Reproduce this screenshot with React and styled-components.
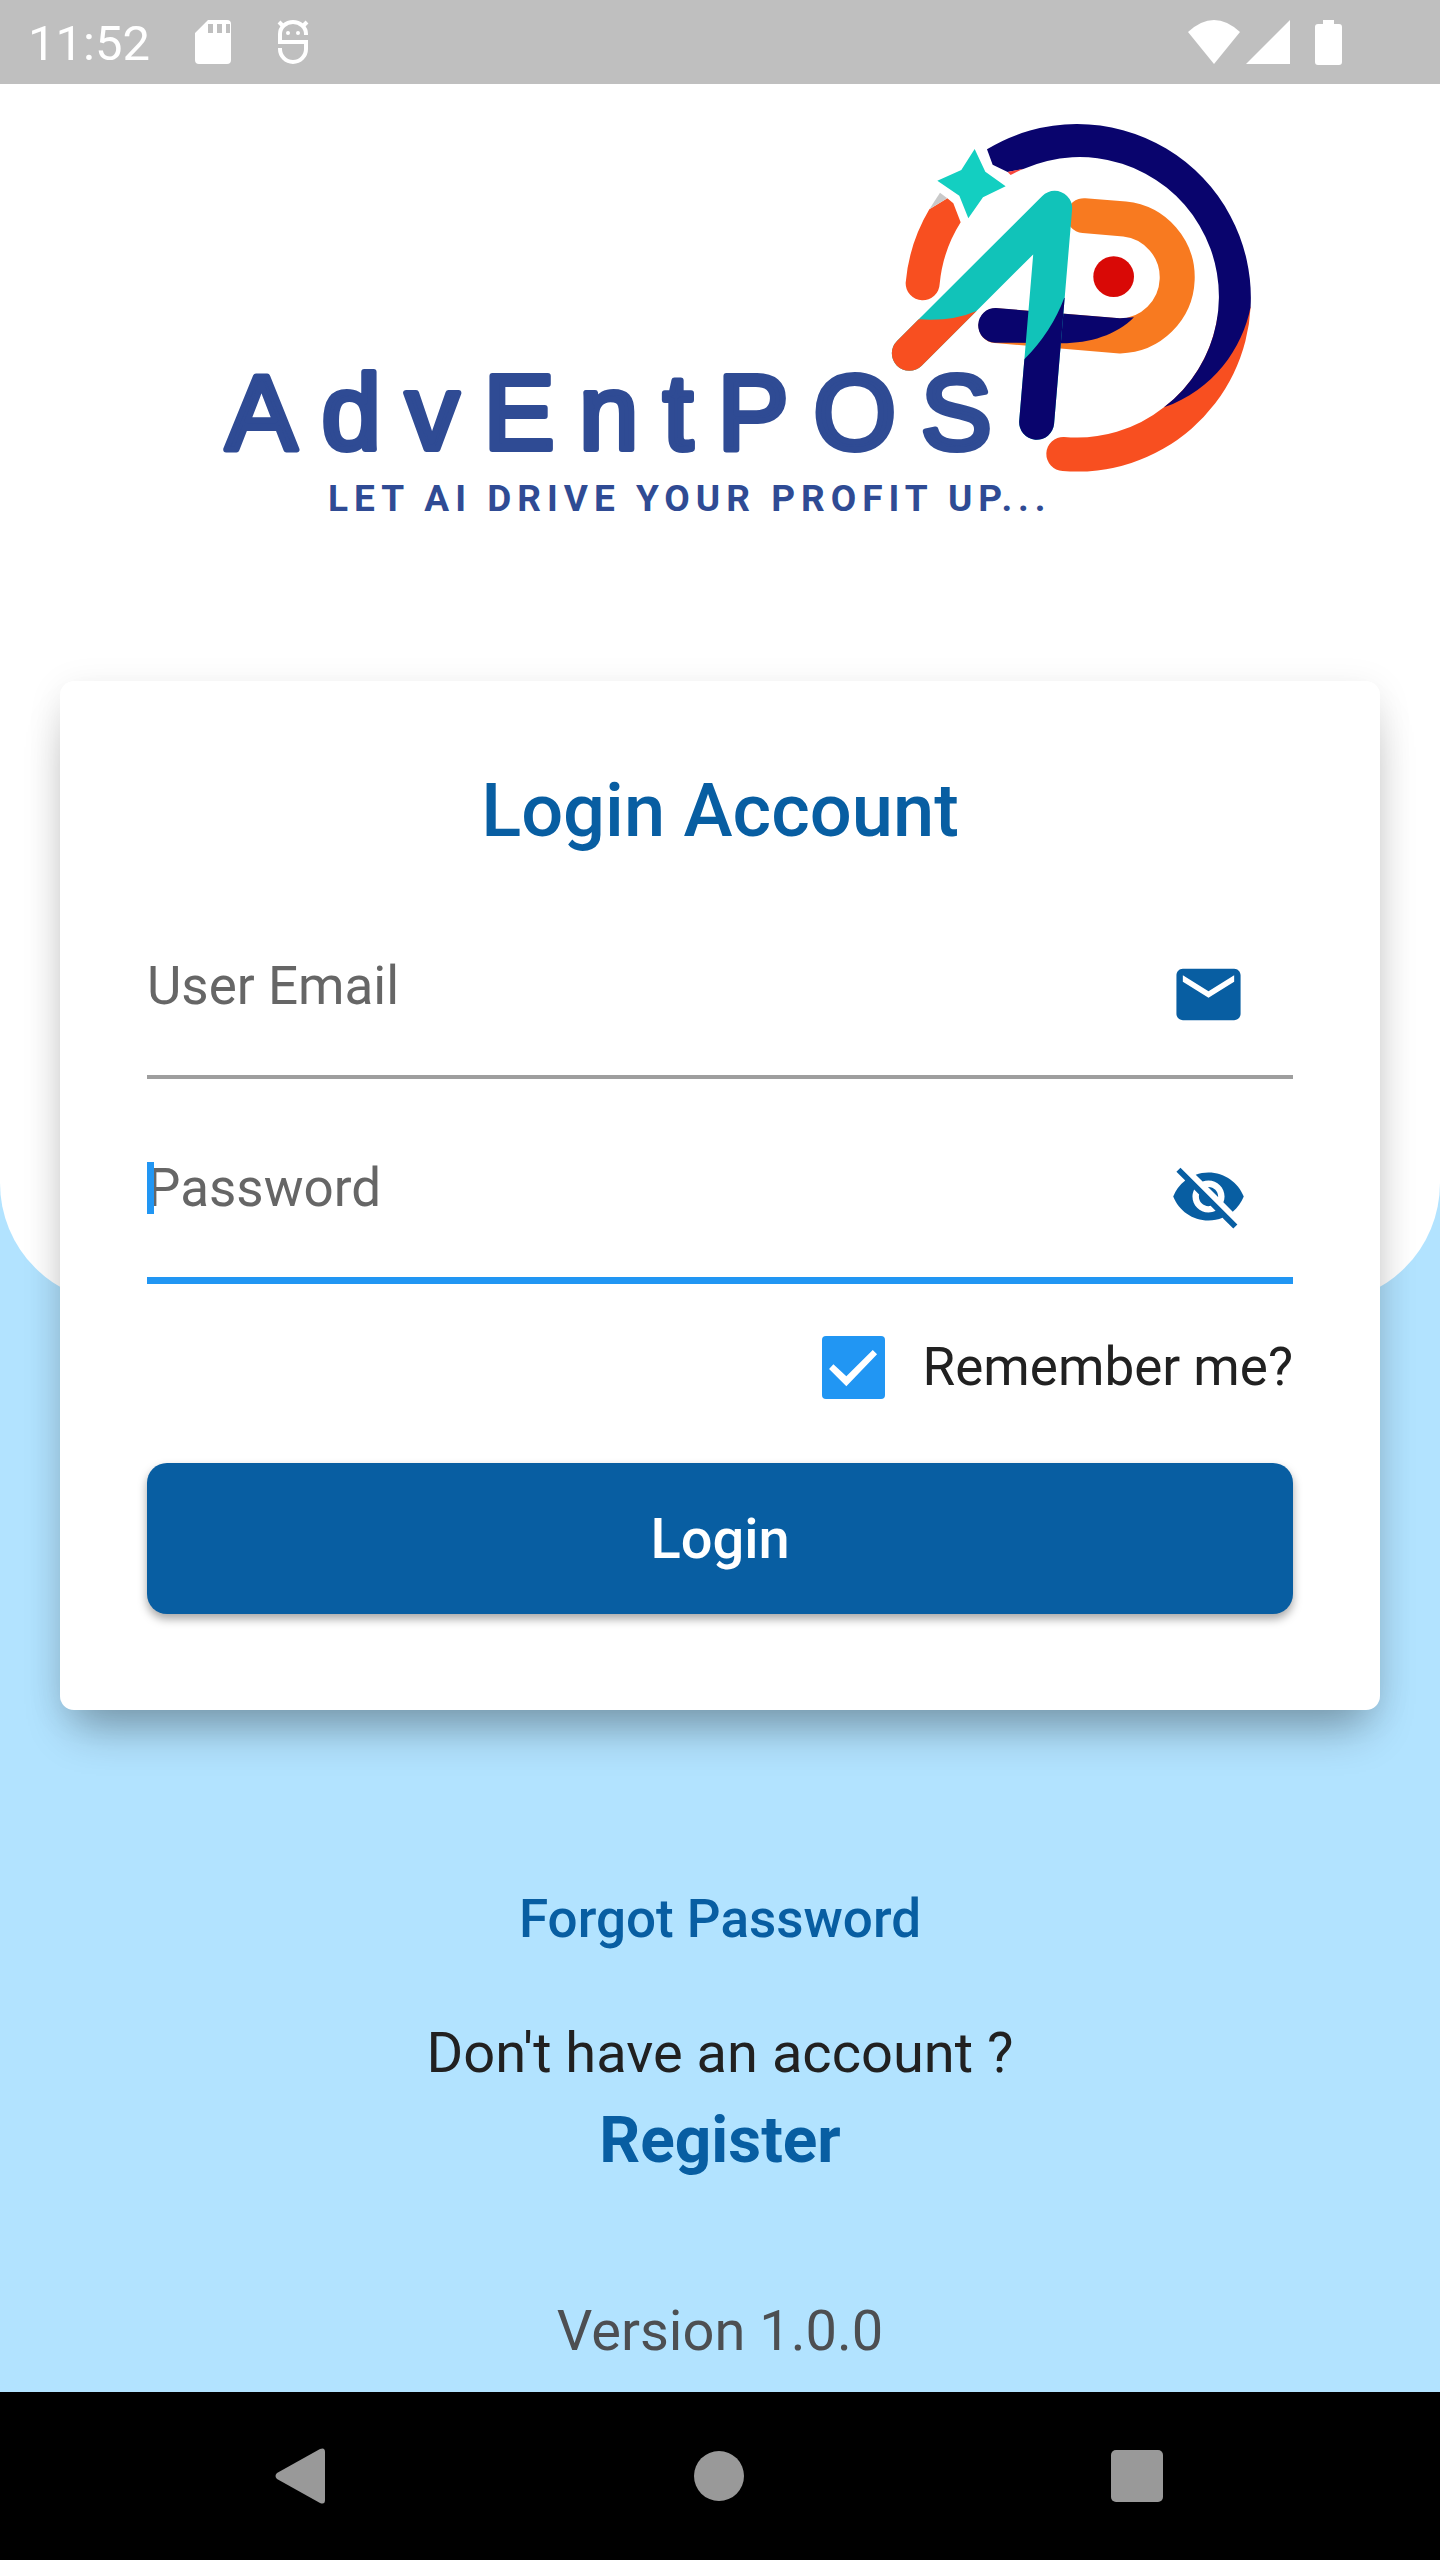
import React, { useState } from "react";
import styled, { createGlobalStyle } from "styled-components";
import { MdEmail, MdVisibilityOff, MdVisibility } from "react-icons/md";

const Palette = {
  brand: "#085ea2",
  accent: "#2196f3",
  sky: "#b2e3ff",
  ink: "#212121",
  hint: "#666666",
  line: "#9e9e9e",
  navy: "#09046d",
  teal: "#11c3b9",
  flame: "#f84f20",
  wordmark: "#2f4b94",
};

const GlobalStyle = createGlobalStyle`
  *, *::before, *::after {
    box-sizing: border-box;
  }
  body {
    margin: 0;
    font-family: Roboto, "Liberation Sans", sans-serif;
    color: ${Palette.ink};
  }
`;

const Screen = styled.div`
  min-height: 100vh;
  display: flex;
  flex-direction: column;
  background-color: ${Palette.sky};
`;

/***************************************
    System bars
****************************************/
const StatusBar = styled.header`
  height: 84px;
  padding: 0 93px 0 28px;
  display: flex;
  align-items: center;
  justify-content: space-between;
  background-color: #bfbfbf;
  color: #fff;

  svg {
    display: block;
    fill: currentColor;
  }
`;

const StatusGroup = styled.div`
  display: flex;
  align-items: center;
  gap: ${(props) => props.$gap}px;
`;

const Clock = styled.span`
  font-size: 49px;
  line-height: 60px;
  padding-top: 4px;
`;

const NavBar = styled.nav`
  height: 168px;
  display: flex;
  align-items: center;
  justify-content: space-between;
  padding: 0 265px 0 262px;
  background-color: #000;
`;

const NavButton = styled.button`
  width: 76px;
  height: 76px;
  padding: 0;
  border: 0;
  background: none;
  display: grid;
  place-items: center;

  svg {
    display: block;
    fill: #999;
  }
`;

/***************************************
    Page
****************************************/
const Body = styled.main`
  flex: 1;
  display: grid;
`;

const Backdrop = styled.div`
  grid-area: 1 / 1;
  align-self: start;
  height: 1219px;
  background-color: #fff;
  border-radius: 0 0 120px 120px;
`;

const Content = styled.div`
  grid-area: 1 / 1;
  display: flex;
  flex-direction: column;
`;

const LogoArt = styled.svg`
  display: block;
  width: 100%;
`;

const Card = styled.form`
  margin: 157px 60px 0;
  padding: 86px 87px 96px;
  background-color: #fff;
  border-radius: 14px;
  box-shadow: 0 30px 44px -14px rgba(0, 0, 0, 0.32),
    0 6px 36px rgba(0, 0, 0, 0.08);
`;

const Title = styled.h1`
  margin: 0 0 58px;
  font-size: 74px;
  line-height: 88px;
  font-weight: 500;
  text-align: center;
  color: ${Palette.brand};
`;

const Field = styled.div`
  position: relative;
  display: flex;
  align-items: center;
  padding-right: 46px;
  border-bottom: ${(props) =>
    props.$active ? `7px solid ${Palette.accent}` : `4px solid ${Palette.line}`};

  & + & {
    margin-top: 36px;
  }

  svg {
    display: block;
    color: ${Palette.brand};
  }
`;

const TextInput = styled.input`
  flex: 1;
  min-width: 0;
  height: 162px;
  padding: 0 0 16px;
  border: 0;
  outline: 0;
  background: none;
  font-family: inherit;
  font-size: 53px;
  color: ${Palette.ink};

  &::placeholder {
    color: ${Palette.hint};
    opacity: 1;
  }
`;

const Caret = styled.span`
  position: absolute;
  left: 0;
  top: 47px;
  width: 7px;
  height: 52px;
  background-color: ${Palette.accent};
`;

const IconButton = styled.button`
  padding: 0;
  border: 0;
  background: none;
`;

const RememberRow = styled.label`
  margin-top: 52px;
  display: flex;
  align-items: center;
  justify-content: flex-end;
  gap: 38px;
  font-size: 53px;
  line-height: 63px;
`;

const CheckBox = styled.input`
  appearance: none;
  margin: 0;
  width: 63px;
  height: 63px;
  border: 7px solid ${Palette.hint};
  border-radius: 4px;
  display: grid;
  place-items: center;

  &:checked {
    border: 0;
    background-color: ${Palette.accent};
  }

  &:checked::before {
    content: "";
    width: 48px;
    height: 40px;
    background-color: #fff;
    clip-path: polygon(
      0 54%,
      9% 42%,
      36% 72%,
      91% 6%,
      100% 17%,
      36% 97%
    );
  }
`;

const LoginButton = styled.button`
  display: block;
  width: 100%;
  height: 151px;
  margin-top: 64px;
  border: 0;
  border-radius: 20px;
  background-color: ${Palette.brand};
  box-shadow: 0 5px 10px rgba(0, 0, 0, 0.35);
  font-family: inherit;
  font-size: 56px;
  font-weight: 500;
  color: #fff;
`;

const Links = styled.div`
  display: flex;
  flex-direction: column;
  align-items: center;
  margin-top: 177px;
  padding-bottom: 28px;
`;

const ForgotLink = styled.a`
  font-size: 53px;
  line-height: 64px;
  font-weight: 500;
  text-decoration: none;
  color: ${Palette.brand};
`;

const Question = styled.p`
  margin: 70px 0 16px;
  font-size: 56px;
  line-height: 64px;
`;

const RegisterLink = styled.a`
  font-size: 64px;
  line-height: 80px;
  font-weight: 700;
  text-decoration: none;
  color: ${Palette.brand};
`;

const Version = styled.p`
  margin: 118px 0 0;
  font-size: 56px;
  line-height: 64px;
  color: #4d4f52;
`;

const Logo = () => {
  return (
    <LogoArt viewBox='0 84 1440 440' role='img' aria-label='AdvEntPOS'>
      <defs>
        <clipPath id='leg-left'>
          <path d='M0 658H180Q275 665 352 632V900H0Z' />
        </clipPath>
        <clipPath id='leg-right'>
          <path d='M613 593Q575 695 493 778H400V1100H720V593Z' />
        </clipPath>
      </defs>
      <text
        x='226'
        y='449'
        fontFamily='"Liberation Sans", sans-serif'
        fontSize='106'
        letterSpacing='25'
        fill={Palette.wordmark}
        stroke={Palette.wordmark}
        strokeWidth='6'
        strokeLinejoin='round'
      >
        AdvEntPOS
      </text>
      <text
        x='328'
        y='511'
        fontFamily='Roboto, sans-serif'
        fontSize='37'
        fontWeight='700'
        letterSpacing='6'
        fill={Palette.wordmark}
      >
        LET AI DRIVE YOUR PROFIT UP...
      </text>
      <g transform='translate(860 100) scale(0.3333)' fill='none'>
        {/* outer ring */}
        <path
          d='M1172 620A521 521 0 0 1 608 1113A51 51 0 0 1 612 1011A418 418 0 0 0 912 922A425 425 0 0 0 1073 650Z'
          fill={Palette.flame}
        />
        <path
          d='M381 148A521 521 0 0 1 1172 620C1148 745 1060 870 912 922A418 418 0 0 0 490 207L443 216L398 194Z'
          fill={Palette.navy}
        />
        <path d='M443 216L490 206L452 225Z' fill='#f8453a' />
        <path
          d='M208 328L262 295L280 310L302 367A418 418 0 0 0 239 552A51 51 0 0 1 137 548A521 521 0 0 1 208 328Z'
          fill={Palette.flame}
        />
        <path d='M208 328L240 278L262 295Z' fill='#c9c9c9' />
        <path
          d='M344 147L376 215L437 259L369 292L325 355L298 287L232 242L304 210Z'
          fill='#13cfc1'
        />
        {/* letter P */}
        <path
          d='M672 347L794 357A176 176 0 0 1 780 708L408 677'
          stroke='#f87a20'
          strokeWidth='105'
          strokeLinecap='round'
        />
        <path
          d='M408 624L505 632L780 655L822 652C770 705 690 730 605 730L405 728A52 52 0 0 1 408 624Z'
          fill={Palette.navy}
        />
        <circle cx='761' cy='530' r='61' fill='#d90906' />
        {/* letter A */}
        <g strokeWidth='105' strokeLinecap='round' strokeLinejoin='round'>
          <path d='M148 760L584 325L530 967' stroke={Palette.teal} />
          <path
            d='M148 760L584 325'
            stroke={Palette.flame}
            clipPath='url(#leg-left)'
          />
          <path
            d='M584 325L530 967'
            stroke={Palette.navy}
            clipPath='url(#leg-right)'
          />
        </g>
      </g>
    </LogoArt>
  );
};

const SystemStatus = () => {
  return (
    <StatusBar>
      <StatusGroup $gap={44}>
        <Clock>11:52</Clock>
        <svg width='38' height='46' viewBox='0 0 38 46'>
          <path
            fillRule='evenodd'
            d='M14 1H33Q37 1 37 5V41Q37 45 33 45H5Q1 45 1 41V14ZM14 5V14H19V5ZM23 5V14H28V5ZM32 5V14H36V5Z'
          />
        </svg>
        <svg width='34' height='46' viewBox='0 0 34 46'>
          <g fill='none' stroke='#fff' strokeWidth='4'>
            <path d='M30 16V15A13 12 0 0 0 4 15V23H30V30A13 13 0 0 1 4 30V29' />
            <path d='M3 3L8 8M31 3L26 8' />
          </g>
          <circle cx='12' cy='14' r='2' />
          <circle cx='22' cy='14' r='2' />
        </svg>
      </StatusGroup>
      <StatusGroup $gap={5}>
        <svg width='54' height='46' viewBox='0 0 54 46'>
          <path d='M1 13Q27 -11 53 13L27 45Z' />
        </svg>
        <svg width='44' height='46' viewBox='0 0 44 46'>
          <path d='M44 1V45H0Z' />
        </svg>
        <svg width='52' height='46' viewBox='0 0 52 46'>
          <path d='M28 1H39V5H44Q47 5 47 8V43Q47 46 44 46H23Q20 46 20 43V8Q20 5 23 5H28Z' />
        </svg>
      </StatusGroup>
    </StatusBar>
  );
};

const SystemNav = () => {
  return (
    <NavBar>
      <NavButton type='button' aria-label='Back'>
        <svg width='50' height='56' viewBox='0 0 50 56'>
          <path d='M2 25L45 1Q50 -1 50 4V52Q50 57 45 55L2 31Q-1 28 2 25Z' />
        </svg>
      </NavButton>
      <NavButton type='button' aria-label='Home'>
        <svg width='50' height='50' viewBox='0 0 50 50'>
          <circle cx='25' cy='25' r='25' />
        </svg>
      </NavButton>
      <NavButton type='button' aria-label='Overview'>
        <svg width='52' height='52' viewBox='0 0 52 52'>
          <rect width='52' height='52' rx='5' />
        </svg>
      </NavButton>
    </NavBar>
  );
};

const App = () => {
  const [visible, setVisible] = useState(false);

  return (
    <Screen>
      <GlobalStyle />
      <SystemStatus />
      <Body>
        <Backdrop />
        <Content>
          <Logo />
          <Card onSubmit={(e) => e.preventDefault()}>
            <Title>Login Account</Title>
            <Field>
              <TextInput
                type='email'
                placeholder='User Email'
                aria-label='User Email'
              />
              <MdEmail size={77} />
            </Field>
            <Field $active>
              <TextInput
                type={visible ? "text" : "password"}
                placeholder='Password'
                aria-label='Password'
              />
              <Caret />
              <IconButton
                type='button'
                aria-label='Show password'
                onClick={() => setVisible(!visible)}
              >
                {visible ? (
                  <MdVisibility size={77} />
                ) : (
                  <MdVisibilityOff size={77} />
                )}
              </IconButton>
            </Field>
            <RememberRow>
              <CheckBox type='checkbox' defaultChecked />
              Remember me?
            </RememberRow>
            <LoginButton type='submit'>Login</LoginButton>
          </Card>
          <Links>
            <ForgotLink href='#forgot'>Forgot Password</ForgotLink>
            <Question>Don't have an account ?</Question>
            <RegisterLink href='#register'>Register</RegisterLink>
            <Version>Version 1.0.0</Version>
          </Links>
        </Content>
      </Body>
      <SystemNav />
    </Screen>
  );
};

export default App;
